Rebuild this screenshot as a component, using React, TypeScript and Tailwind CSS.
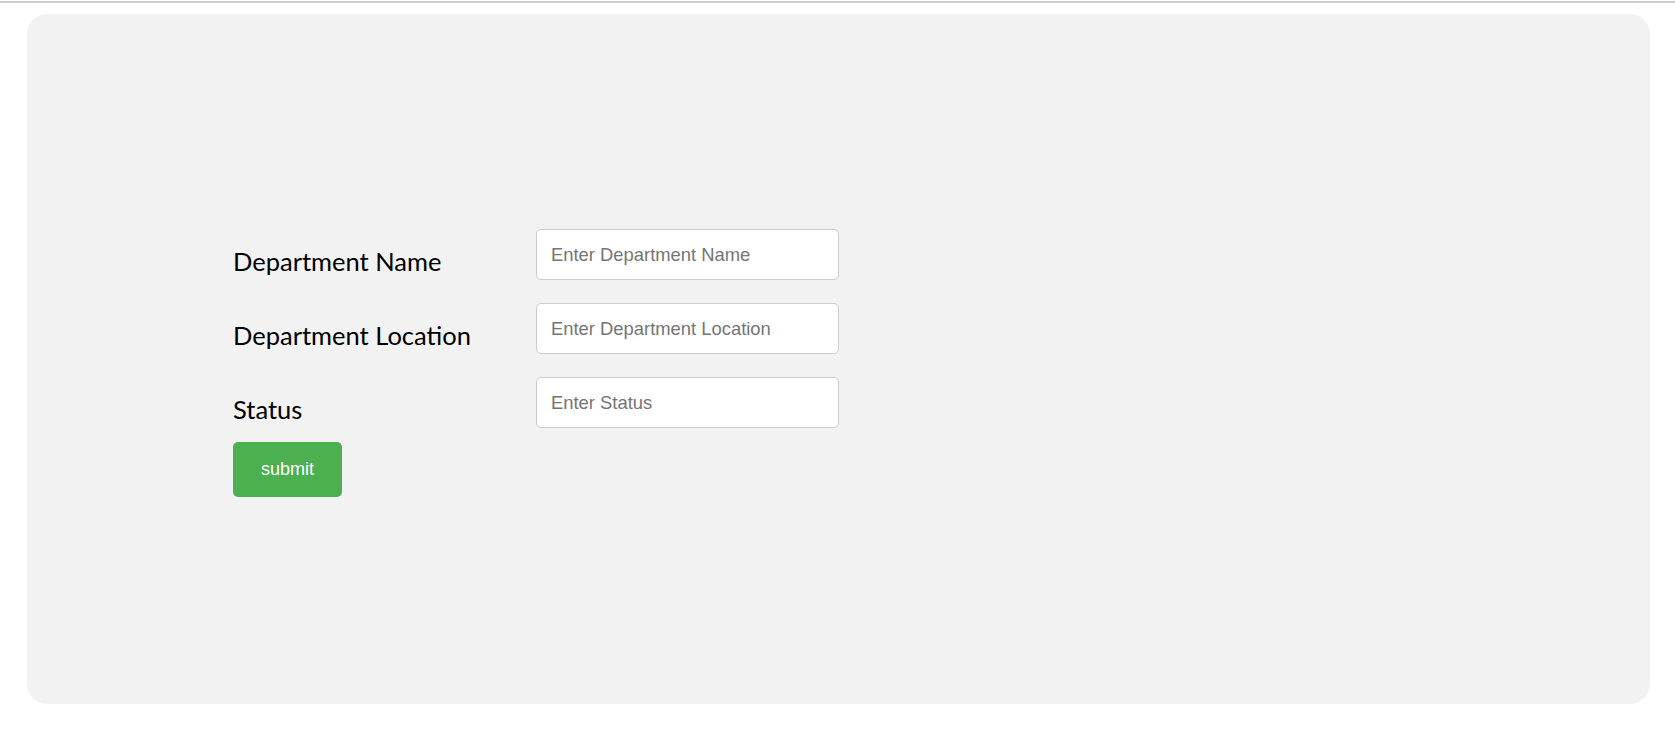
import React from 'react';

const fields = [
    { label: 'Department Name', placeholder: 'Enter Department Name' },
    { label: 'Department Location', placeholder: 'Enter Department Location' },
    { label: 'Status', placeholder: 'Enter Status' },
];

const App: React.FC = () => {
    return (
        <div className="min-h-screen bg-white">
            <div className="mt-px h-[2px] bg-[#cfcfcf]"></div>
            <div className="ml-[27px] mr-[25px] mt-[11px] h-[690px] rounded-[20px] bg-[#f2f2f2] pl-[206px] pt-[215px]">
                <form onSubmit={(e) => e.preventDefault()}>
                    {fields.map((f) => (
                        <div key={f.label} className="flex items-start mb-[23px] last-of-type:mb-[14px]">
                            <label className="w-[303px] pt-[17px] text-[25.5px] leading-[30px] text-black font-['Lato',sans-serif]">
                                {f.label}
                            </label>
                            <input
                                type="text"
                                placeholder={f.placeholder}
                                className="w-[303px] h-[51px] px-[14px] bg-white border border-[#cccccc] rounded-[5px] text-[18.4px] text-black placeholder:text-[#757575] font-['Liberation_Sans',Arial,sans-serif] outline-none"
                            />
                        </div>
                    ))}
                    <button
                        type="submit"
                        className="w-[109px] h-[55px] rounded-[5px] bg-[#4caf50] text-white text-[18px] font-['Liberation_Sans',Arial,sans-serif] cursor-pointer"
                    >
                        submit
                    </button>
                </form>
            </div>
        </div>
    );
};

export default App;
